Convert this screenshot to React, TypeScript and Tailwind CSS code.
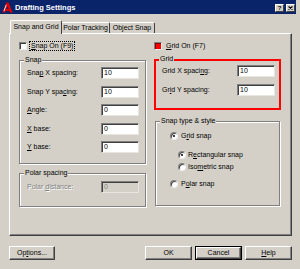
import React from "react";

function M({ t, i }: { t: string; i: number }) {
  if (i < 0) return <>{t}</>;
  return (
    <>
      {t.slice(0, i)}
      <span className="underline">{t[i]}</span>
      {t.slice(i + 1)}
    </>
  );
}

function Input({ v, disabled }: { v: string; disabled?: boolean }) {
  return (
    <div
      className={`w-[38px] h-[12px] border border-t-[#808080] border-l-[#808080] border-r-[#e8e6e0] border-b-[#e8e6e0] shadow-[inset_1px_1px_0_#404040] pl-[2px] flex items-center ${
        disabled ? "bg-[#d4d0c8] text-[#808080]" : "bg-white text-black"
      }`}
    >
      {v}
    </div>
  );
}

function Group({
  label,
  className,
  children,
}: {
  label: string;
  className: string;
  children: React.ReactNode;
}) {
  return (
    <div
      className={`relative border border-[#808080] shadow-[inset_1px_1px_0_#fff,1px_1px_0_#fff] ${className}`}
    >
      <span className="absolute top-[-5px] left-[4px] px-[1px] bg-[#d4d0c8] leading-[8px]">
        {label}
      </span>
      {children}
    </div>
  );
}

function Radio({ on }: { on: boolean }) {
  return (
    <div className="w-[8px] h-[8px] rounded-full bg-white border border-t-[#808080] border-l-[#808080] border-r-[#f0f0f0] border-b-[#f0f0f0] shadow-[inset_1px_1px_0_#404040] flex items-center justify-center">
      {on && <div className="w-[2px] h-[2px] rounded-full bg-black" />}
    </div>
  );
}

function Btn({ children, def }: { children: React.ReactNode; def?: boolean }) {
  if (def) {
    return (
      <div className="w-[47px] h-[14px] border border-black flex">
        <div className="flex-1 border border-t-white border-l-white border-r-[#404040] border-b-[#404040] shadow-[inset_-1px_-1px_0_#808080] flex items-center justify-center">
          {children}
        </div>
      </div>
    );
  }
  return (
    <div className="w-[47px] h-[14px] border border-t-white border-l-white border-r-[#404040] border-b-[#404040] shadow-[inset_-1px_-1px_0_#808080] flex items-center justify-center">
      {children}
    </div>
  );
}

export default function App() {
  return (
    <div className="w-[300px] h-[269px] bg-[#d4d0c8] overflow-hidden font-['Liberation_Sans',Arial,sans-serif] text-[7px] leading-[8px] text-black flex flex-col">
      {/* Title bar */}
      <div className="w-[296px] h-[14px] bg-[#0a246a] flex items-center pt-[1px]">
        <svg width="11" height="11" viewBox="0 0 11 11" className="ml-[2px]">
          <polygon points="0.5,10.5 4.5,0.5 6.5,0.5 10.5,10.5 8,10.5 5.5,4 3,10.5" fill="#e00000" />
          <polygon points="3.5,7 7.5,7 8.2,9 2.8,9" fill="#e00000" />
          <polygon points="1.5,9 4,2.5 4.6,3 2.2,9.5" fill="#ffffff" />
        </svg>
        <span className="ml-[2px] text-white font-bold text-[7.5px]">Drafting Settings</span>
        <div className="ml-auto flex gap-[2px] pr-[1px] mt-[1px]">
          <div className="w-[9px] h-[8px] bg-[#d4d0c8] border border-t-white border-l-white border-r-[#404040] border-b-[#404040] flex items-center justify-center font-bold text-[6px] leading-[6px]">
            ?
          </div>
          <div className="w-[9px] h-[8px] bg-[#d4d0c8] border border-t-white border-l-white border-r-[#404040] border-b-[#404040] flex items-center justify-center">
            <svg width="5" height="4" viewBox="0 0 5 4">
              <path d="M0.5 0.5 L4.5 3.5 M4.5 0.5 L0.5 3.5" stroke="#000" strokeWidth="1.1" />
            </svg>
          </div>
        </div>
      </div>

      <div className="pl-[9px] pr-[8px] pt-[6px]">
        {/* Tabs */}
        <div className="flex items-end h-[13px] pl-[1px]">
          <div className="relative z-10 w-[52px] h-[14px] mb-[-1px] bg-[#d4d0c8] border-t border-l border-r border-t-white border-l-white border-r-[#404040] rounded-t-[2px] flex items-center justify-center pb-[1px]">
            Snap and Grid
          </div>
          <div className="w-[48px] h-[11px] border-t border-r border-t-white border-r-[#404040] rounded-tr-[2px] flex items-center justify-center">
            Polar Tracking
          </div>
          <div className="w-[45px] h-[11px] border-t border-r border-t-white border-r-[#404040] rounded-tr-[2px] flex items-center justify-center">
            Object Snap
          </div>
        </div>

        {/* Panel */}
        <div className="w-[283px] h-[203px] border border-t-white border-l-white border-r-[#404040] border-b-[#404040] shadow-[inset_-1px_-1px_0_#808080] flex gap-[8px] pl-[9px] pt-[7px]">
          {/* Left column */}
          <div className="w-[127px] flex flex-col">
            <div className="h-[10px] flex items-center">
              <div className="w-[8px] h-[8px] bg-white border border-t-[#808080] border-l-[#808080] border-r-[#f0f0f0] border-b-[#f0f0f0] shadow-[inset_1px_1px_0_#404040]" />
              <span className="ml-[2px] px-[1px] h-[10px] flex items-center border border-dotted border-black">
                <M t="Snap On (F9)" i={0} />
              </span>
            </div>

            <Group label="Snap" className="mt-[9px] h-[104px] pt-[6px] pl-[7px] pr-[6px]">
              <div className="flex flex-col">
                <div className="h-[12px] flex items-center justify-between">
                  <span><M t="Snap X spacing:" i={3} /></span>
                  <Input v="10" />
                </div>
                <div className="h-[12px] mt-[7px] flex items-center justify-between">
                  <span><M t="Snap Y spacing:" i={10} /></span>
                  <Input v="10" />
                </div>
                <div className="h-[12px] mt-[6px] flex items-center justify-between">
                  <span><M t="Angle:" i={0} /></span>
                  <Input v="0" />
                </div>
                <div className="h-[12px] mt-[7px] flex items-center justify-between">
                  <span><M t="X base:" i={0} /></span>
                  <Input v="0" />
                </div>
                <div className="h-[12px] mt-[6px] flex items-center justify-between">
                  <span><M t="Y base:" i={0} /></span>
                  <Input v="0" />
                </div>
              </div>
            </Group>

            <Group label="Polar spacing" className="mt-[9px] h-[34px] pt-[7px] pl-[7px] pr-[6px]">
              <div className="h-[12px] flex items-center justify-between">
                <span className="text-[#808080] [text-shadow:1px_1px_0_#fff]">
                  <M t="Polar distance:" i={6} />
                </span>
                <Input v="0" disabled />
              </div>
            </Group>
          </div>

          {/* Right column */}
          <div className="w-[127px] flex flex-col">
            <div className="h-[10px] flex items-center">
              <div className="w-[8px] h-[8px] bg-[#ff0000] border border-t-[#808080] border-l-[#808080] border-r-[#f0f0f0] border-b-[#f0f0f0] shadow-[inset_1px_1px_0_#800000]" />
              <span className="ml-[3px] px-[1px]">
                <M t="Grid On (F7)" i={0} />
              </span>
            </div>

            <div className="relative mt-[8px] h-[51px] border-2 border-[#ff0000] pt-[4px] pl-[6px] pr-[4px]">
              <span className="absolute top-[-6px] left-[3px] px-[1px] bg-[#d4d0c8] leading-[8px]">
                Grid
              </span>
              <div className="h-[12px] flex items-center justify-between">
                <span><M t="Grid X spacing:" i={12} /></span>
                <Input v="10" />
              </div>
              <div className="h-[12px] mt-[7px] flex items-center justify-between">
                <span><M t="Grid Y spacing:" i={2} /></span>
                <Input v="10" />
              </div>
            </div>

            <Group label="Snap type & style" className="mt-[11px] mx-[1px] h-[85px] pt-[9px]">
              <div className="h-[10px] flex items-center pl-[14px] gap-[3px]">
                <Radio on />
                <span><M t="Grid snap" i={1} /></span>
              </div>
              <div className="h-[10px] mt-[9px] flex items-center pl-[22px] gap-[2px]">
                <Radio on />
                <span><M t="Rectangular snap" i={1} /></span>
              </div>
              <div className="h-[10px] mt-[2px] flex items-center pl-[22px] gap-[2px]">
                <Radio on={false} />
                <span><M t="Isometric snap" i={3} /></span>
              </div>
              <div className="h-[10px] mt-[7px] flex items-center pl-[14px] gap-[3px]">
                <Radio on={false} />
                <span><M t="Polar snap" i={1} /></span>
              </div>
            </Group>
          </div>
        </div>
      </div>

      {/* Buttons */}
      <div className="mt-[10px] flex pl-[9px] pr-[8px]">
        <div className="w-[46px] h-[14px] border border-t-white border-l-white border-r-[#404040] border-b-[#404040] shadow-[inset_-1px_-1px_0_#808080] flex items-center justify-center">
          <M t="Options..." i={2} />
        </div>
        <div className="ml-auto flex gap-[3px]">
          <Btn>OK</Btn>
          <Btn def>Cancel</Btn>
          <Btn>
            <M t="Help" i={0} />
          </Btn>
        </div>
      </div>
    </div>
  );
}
